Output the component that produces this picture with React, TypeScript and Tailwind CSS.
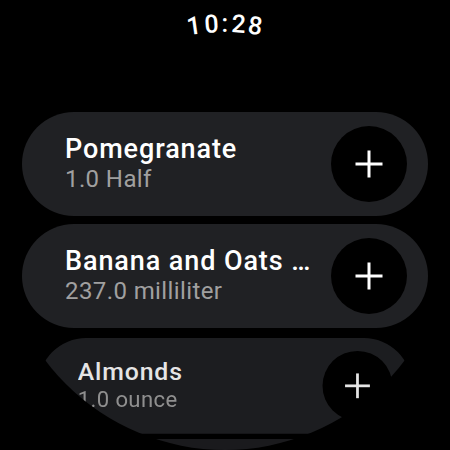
type Food = { name: string; amount: string }

const foods: Food[] = [
  { name: "Pomegranate", amount: "1.0 Half" },
  { name: "Banana and Oats …", amount: "237.0 milliliter" },
  { name: "Almonds", amount: "1.0 ounce" },
]

function PlusIcon() {
  return (
    <svg width="28" height="28" viewBox="0 0 28 28" fill="white">
      <rect x="12.5" y="0.5" width="3" height="27" />
      <rect x="0.5" y="12.5" width="27" height="3" />
    </svg>
  )
}

function FoodChip({ food, className = "" }: { food?: Food; className?: string }) {
  return (
    <div
      className={`mx-[22px] h-[104px] shrink-0 rounded-full bg-[#202124] flex items-center pl-[43px] pr-[21px] ${className}`}
    >
      <div className="flex-1 min-w-0 flex flex-col">
        {food && (
          <>
            <span className="text-[27px] leading-[30px] font-medium text-white tracking-[0.9px] whitespace-nowrap overflow-hidden">
              {food.name}
            </span>
            <span className="text-[24px] leading-[30px] text-[#a0a0a0] tracking-[0.4px] whitespace-nowrap">
              {food.amount}
            </span>
          </>
        )}
      </div>
      <button className="w-[76px] h-[76px] shrink-0 rounded-full bg-black flex items-center justify-center">
        <PlusIcon />
      </button>
    </div>
  )
}

export default function App() {
  // caracteres del reloj siguiendo la curva de la pantalla
  const time = [
    { c: "1", cls: "rotate-[-8deg] translate-y-[2px]" },
    { c: "0", cls: "rotate-[-4deg] translate-y-[0.5px]" },
    { c: ":", cls: "" },
    { c: "2", cls: "rotate-[4deg] translate-y-[0.5px]" },
    { c: "8", cls: "rotate-[8deg] translate-y-[2px]" },
  ]

  return (
    <div className="w-[450px] h-[450px] bg-black overflow-hidden" style={{ fontFamily: "Roboto, 'Noto Sans', sans-serif" }}>
      <div className="w-[450px] h-[450px] rounded-full overflow-hidden bg-black flex flex-col">
        <div className="pt-[9px] h-[112px] shrink-0 flex justify-center">
          <div className="flex text-[25px] leading-[30px] text-white font-medium tracking-[0.6px]">
            {time.map((t, i) => (
              <span key={i} className={`inline-block ${t.cls}`}>
                {t.c}
              </span>
            ))}
          </div>
        </div>
        <div className="flex flex-col gap-[8px]">
          <FoodChip food={foods[0]} />
          <FoodChip food={foods[1]} />
          <FoodChip food={foods[2]} className="scale-[0.92] origin-[50%_25px] opacity-90" />
          <FoodChip className="scale-[0.84] origin-top -mt-[9px] opacity-80" />
        </div>
      </div>
    </div>
  )
}
